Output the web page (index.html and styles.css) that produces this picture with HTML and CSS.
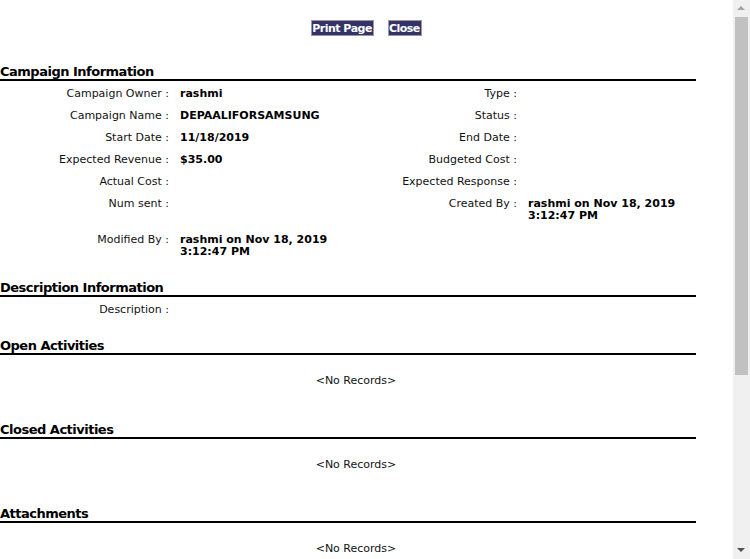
FILE: index.html
```html
<!DOCTYPE html>
<html>
<head>
<meta charset="utf-8">
<title>Campaign</title>
<link rel="stylesheet" href="styles.css">
</head>
<body>
<div class="page">
  <div class="toolbar">
    <button class="btn">Print Page</button>
    <button class="btn">Close</button>
  </div>

  <div class="sec-title first">Campaign Information</div>
  <div class="details">
    <div class="lbl">Campaign Owner :</div><div class="val">rashmi</div>
    <div class="lbl">Type :</div><div class="val"></div>

    <div class="lbl">Campaign Name :</div><div class="val">DEPAALIFORSAMSUNG</div>
    <div class="lbl">Status :</div><div class="val"></div>

    <div class="lbl">Start Date :</div><div class="val">11/18/2019</div>
    <div class="lbl">End Date :</div><div class="val"></div>

    <div class="lbl">Expected Revenue :</div><div class="val">$35.00</div>
    <div class="lbl">Budgeted Cost :</div><div class="val"></div>

    <div class="lbl">Actual Cost :</div><div class="val"></div>
    <div class="lbl">Expected Response :</div><div class="val"></div>

    <div class="lbl tall">Num sent :</div><div class="val tall"></div>
    <div class="lbl tall">Created By :</div><div class="val tall">rashmi on Nov 18, 2019 3:12:47 PM</div>

    <div class="lbl">Modified By :</div><div class="val">rashmi on Nov 18, 2019 3:12:47 PM</div>
    <div class="lbl"></div><div class="val"></div>
  </div>

  <div class="sec-title">Description Information</div>
  <div class="details">
    <div class="lbl">Description :</div><div class="val"></div>
    <div class="lbl"></div><div class="val"></div>
  </div>

  <div class="sec-title">Open Activities</div>
  <div class="norec">&lt;No Records&gt;</div>

  <div class="sec-title">Closed Activities</div>
  <div class="norec">&lt;No Records&gt;</div>

  <div class="sec-title">Attachments</div>
  <div class="norec">&lt;No Records&gt;</div>
</div>

<div class="scrollbar">
  <div class="sb-up"></div>
  <div class="sb-thumb"></div>
  <div class="sb-down"></div>
</div>
</body>
</html>
```

FILE: styles.css
```css
html, body {
  margin: 0;
  padding: 0;
  background: #fff;
  overflow: hidden;
}
body {
  font-family: Verdana, "DejaVu Sans", sans-serif;
  font-size: 11px;
  color: #000;
}
.page {
  width: 733px;
}
.toolbar {
  display: flex;
  justify-content: center;
  gap: 14px;
  padding-top: 20px;
  height: 16px;
}
.btn {
  font-family: Verdana, "DejaVu Sans", sans-serif;
  font-size: 11px;
  font-weight: bold;
  letter-spacing: -0.5px;
  color: #fff;
  background: #33336a;
  border: 1px solid #9a9a9a;
  padding: 0 1px 0 0;
  height: 16px;
  line-height: 13px;
  margin: 0;
}
.sec-title {
  width: 696px;
  font-size: 13px;
  font-weight: bold;
  letter-spacing: -0.5px;
  line-height: 15px;
  padding-top: 1px;
  border-bottom: 2px solid #000;
  margin-top: 18px;
}
.sec-title.first {
  margin-top: 27px;
}
.details {
  width: 696px;
  display: grid;
  grid-template-columns: 174px 174px 174px 174px;
}
.lbl {
  text-align: right;
  padding: 7px 5px 3px 0;
  line-height: 12px;
  color: #111;
}
.val {
  padding: 7px 0 3px 6px;
  line-height: 12px;
  font-weight: bold;
}
.tall {
  padding-bottom: 5px;
}
.norec {
  width: 712px;
  text-align: center;
  padding-top: 20px;
  padding-bottom: 16px;
  line-height: 12px;
  color: #111;
}
.scrollbar {
  position: fixed;
  top: 0;
  right: 0;
  width: 17px;
  height: 559px;
  background: #f0f0f0;
}
.sb-thumb {
  position: absolute;
  left: 2px;
  top: 17px;
  width: 13px;
  height: 358px;
  background: #c1c1c1;
}
.sb-up {
  position: absolute;
  left: 4px;
  top: 6px;
  width: 0;
  height: 0;
  border-left: 4px solid transparent;
  border-right: 4px solid transparent;
  border-bottom: 4px solid #a3a3a3;
}
.sb-down {
  position: absolute;
  left: 4px;
  bottom: 7px;
  width: 0;
  height: 0;
  border-left: 4px solid transparent;
  border-right: 4px solid transparent;
  border-top: 4px solid #505050;
}
```
